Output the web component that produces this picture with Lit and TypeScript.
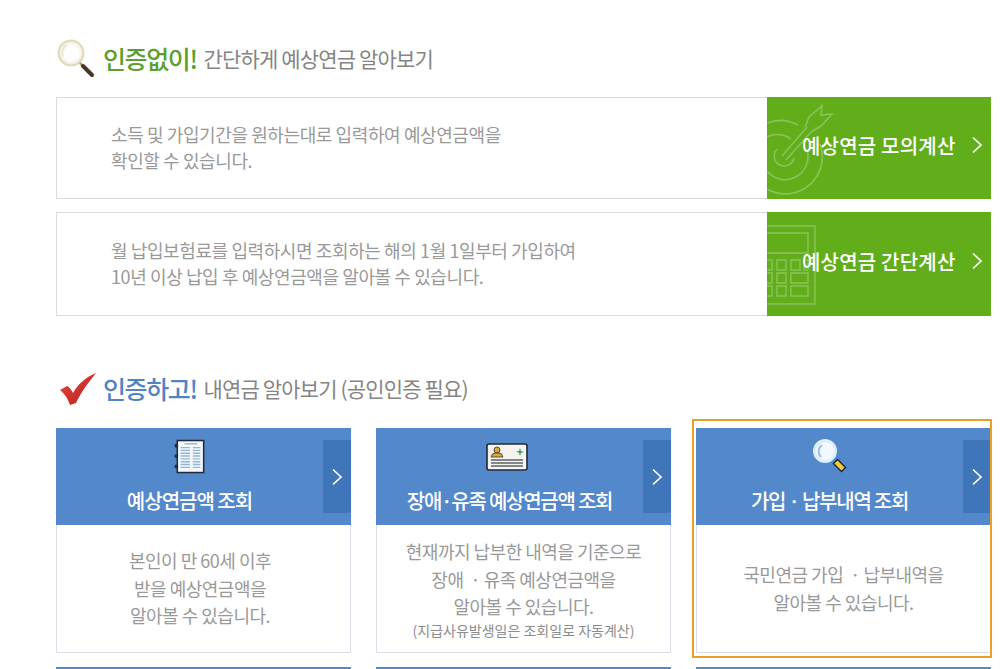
import { LitElement, html, css, svg } from 'lit';
import { customElement } from 'lit/decorators.js';

const magnifier = svg`<svg width="40" height="40" viewBox="0 0 40 40">
  <defs><radialGradient id="lens" cx="50%" cy="50%" r="50%"><stop offset="0.6" stop-color="#fff"/><stop offset="0.9" stop-color="#f1ecdc"/><stop offset="1" stop-color="#d8cfae"/></radialGradient></defs>
  <line x1="23" y1="24" x2="35" y2="36" stroke="#b89a70" stroke-width="2.5" stroke-linecap="round"/>
  <line x1="27" y1="28" x2="36" y2="37" stroke="#4a3426" stroke-width="4" stroke-linecap="round"/>
  <circle cx="15" cy="15" r="12.5" fill="url(#lens)" stroke="#e2dabd" stroke-width="2"/>
  <path d="M7 18a9 9 0 0 1 4-11" fill="none" stroke="#ece7d4" stroke-width="2"/>
</svg>`;

const check = svg`<svg width="36" height="32" viewBox="0 0 36 32">
  <defs><linearGradient id="red" x1="0" y1="0" x2="1" y2="1"><stop offset="0" stop-color="#ee4a40"/><stop offset="1" stop-color="#b01c1c"/></linearGradient></defs>
  <path d="M0 17 L7 13 Q10 14 13 20 C18 11 26 4 36 0 C29 9 21 19 16 30 L10 32 C8 26 5 21 0 17Z" fill="url(#red)"/>
</svg>`;

const target = svg`<svg class="bg" width="70" height="92" viewBox="0 0 70 92" fill="none" stroke="#8cc25c" stroke-width="1.6">
  <path d="M0 19a37 37 0 0 1 31 2M53 40a37 37 0 0 1-53 45"/>
  <path d="M0 33a23 23 0 0 1 24 2M40 46a23 23 0 0 1-40 21"/>
  <path d="M10 45a10 10 0 1 0 17 9"/>
  <path d="M15 52 L40 23 M19 56 L44 28"/>
  <path d="M38 23 L42 13 L55 2 L54 11 L65 10 L54 22 L44 28"/>
</svg>`;

const calculator = svg`<svg class="bg tall" width="50" height="80" viewBox="0 0 50 80" fill="none" stroke="#8cc25c" stroke-width="1.4">
  <path d="M0 1H48V79H0"/>
  <path d="M0 8H41V28H0"/>
  <path d="M0 35H5V45H0M10 35H19V45H10ZM24 35H33V45H24ZM37 35H41V45H37Z"/>
  <path d="M0 48H5V58H0M10 48H19V58H10ZM24 48H41V58H24Z"/>
  <path d="M0 61H5V71H0M10 61H19V71H10ZM24 61H41V71H24Z"/>
</svg>`;

const notebook = svg`<svg width="32" height="36" viewBox="0 0 34 38">
  <rect x="3.5" y="1.5" width="28" height="34" fill="#f4f8fc" stroke="#1f2a3a" stroke-width="1.6"/>
  <circle cx="2.5" cy="7" r="2" fill="#1f2a3a"/><circle cx="2.5" cy="18" r="2" fill="#1f2a3a"/><circle cx="2.5" cy="29" r="2" fill="#1f2a3a"/>
  <path d="M11 5H25" stroke="#9fb4cc" stroke-width="1.5"/>
  <path d="M7 9H17M20 9H28M7 12H17M20 12H28M7 15H17M20 15H28M7 18H17M20 18H28M7 21H17M20 21H28M7 24H17M20 24H28M7 27H17M20 27H28M7 30H17M20 30H28" stroke="#92b6da" stroke-width="1.5"/>
</svg>`;

const idCard = svg`<svg width="42" height="28" viewBox="0 0 42 28">
  <rect x="1" y="1" width="40" height="26" rx="2" fill="#f6f4ee" stroke="#1f2a3a" stroke-width="1.6"/>
  <circle cx="11" cy="7" r="3" fill="#d8a93a" stroke="#3a3220" stroke-width="0.8"/>
  <path d="M5 14 Q6 10 9 10 H13 Q16 10 17 14Z" fill="#d8a93a" stroke="#3a3220" stroke-width="0.8"/>
  <path d="M30 8 L33 8 L34 5 L35 8 L38 9 L35 10 L34 13 L33 10Z" fill="#3fa56a"/>
  <path d="M5 17H37M5 20H37M5 23H37" stroke="#5f6368" stroke-width="1.4"/>
</svg>`;

const searchIcon = svg`<svg width="36" height="36" viewBox="0 0 36 36">
  <line x1="23" y1="22" x2="32" y2="31" stroke="#1c2430" stroke-width="7"/>
  <line x1="24" y1="23" x2="31" y2="30" stroke="#f0cd3a" stroke-width="4.5"/>
  <circle cx="13" cy="12" r="10.5" fill="#f2f8ff" stroke="#dcefff" stroke-width="3"/>
  <path d="M9 18a8 8 0 0 1 1-12" fill="none" stroke="#9cc0e6" stroke-width="2"/>
</svg>`;

const chevron = svg`<svg width="12" height="18" viewBox="0 0 12 18" fill="none" stroke="#fff" stroke-width="1.7"><path d="M2 1.5 L10 9 L2 16.5"/></svg>`;

@customElement('app-root')
export class AppRoot extends LitElement {

    static styles = css`
    :host {
      display: block;
      height: 669px;
      overflow: hidden;
      background: #fff;
      box-sizing: border-box;
      padding: 37px 17px 0 56px;
      font-family: "Noto Sans CJK KR", "Noto Sans", sans-serif;
      color: #999;
    }

    .heading {
      display: flex;
      align-items: center;
      height: 42px;
      white-space: nowrap;
    }

    .heading .mark {
      width: 47px;
      display: flex;
      flex: none;
    }

    .heading.second .mark {
      width: 43px;
      padding-left: 4px;
      padding-top: 2px;
    }

    .heading strong {
      font-size: 25px;
      font-weight: 500;
      letter-spacing: -1.4px;
      margin-right: 7px;
    }

    .heading span {
      font-size: 21px;
      letter-spacing: -0.85px;
      color: #858585;
    }

    .green { color: #5c9f2e; }
    .blue { color: #4f84c4; }

    .first { margin-bottom: 18px; }
    .second { margin: 51px 0 19px; }

    .banner {
      display: flex;
      height: 102px;
      box-sizing: border-box;
      border: 1px solid #dcdcd6;
      border-right: 0;
    }

    .banner.tall {
      height: 104px;
      margin-top: 13px;
    }

    .banner p {
      flex: 1;
      margin: 0;
      padding: 0 0 2px 54px;
      align-self: center;
      font-size: 18px;
      line-height: 26.5px;
      letter-spacing: -0.4px;
    }

    .calc {
      position: relative;
      overflow: hidden;
      width: 224px;
      margin: -1px 0;
      background: #62ae1a;
      color: #fff;
      display: flex;
      align-items: center;
      box-sizing: border-box;
      padding: 0 8px 6px 35px;
      justify-content: space-between;
      font-size: 20px;
      font-weight: 500;
      letter-spacing: 0.2px;
    }

    .calc .bg {
      position: absolute;
      left: 0;
      top: 7px;
    }

    .calc .bg.tall {
      top: 13px;
    }

    .calc b {
      position: relative;
      font-weight: 500;
    }

    .calc svg:not(.bg) {
      position: relative;
    }

    .cards {
      display: grid;
      grid-template-columns: repeat(3, 295px);
      column-gap: 25px;
      row-gap: 14px;
    }

    .card {
      position: relative;
    }

    .card.focus::after {
      content: "";
      position: absolute;
      left: -4px;
      right: -1px;
      top: -9px;
      bottom: -5px;
      border: 2px solid #e9a024;
      pointer-events: none;
    }

    .head {
      position: relative;
      height: 97px;
      box-sizing: border-box;
      padding-right: 28px;
      background: #5388cb;
      color: #fff;
      display: flex;
      flex-direction: column;
      align-items: center;
    }

    .head .icon {
      height: 58px;
      display: flex;
      align-items: center;
    }

    .head .icon.id {
      padding-right: 6px;
    }

    .head h3 {
      margin: 0;
      font-size: 20px;
      font-weight: 500;
      line-height: 30px;
      letter-spacing: -1px;
      white-space: nowrap;
    }

    .head h3.tight {
      letter-spacing: -1.25px;
    }

    .head .go {
      position: absolute;
      right: 0;
      top: 12px;
      width: 28px;
      height: 73px;
      background: #3f76b9;
      display: flex;
      align-items: center;
      justify-content: center;
    }

    .body {
      height: 128px;
      box-sizing: border-box;
      border: 1px solid #d8dde6;
      border-top: 0;
      display: flex;
      flex-direction: column;
      justify-content: center;
      text-align: center;
      font-size: 18px;
      line-height: 27.5px;
      letter-spacing: -0.5px;
    }

    .body.shifted {
      padding-right: 7px;
    }

    .body small {
      font-size: 14px;
      line-height: 18px;
      letter-spacing: 0;
      color: #8c8c8c;
    }
  `;

    render() {
        return html`
      <div class="heading first">
        <div class="mark">${magnifier}</div>
        <strong class="green">인증없이!</strong>
        <span>간단하게 예상연금 알아보기</span>
      </div>

      <div class="banner">
        <p>소득 및 가입기간을 원하는대로 입력하여 예상연금액을<br />확인할 수 있습니다.</p>
        <div class="calc">${target}<b>예상연금 모의계산</b>${chevron}</div>
      </div>
      <div class="banner tall">
        <p>월 납입보험료를 입력하시면 조회하는 해의 1월 1일부터 가입하여<br />10년 이상 납입 후 예상연금액을 알아볼 수 있습니다.</p>
        <div class="calc">${calculator}<b>예상연금 간단계산</b>${chevron}</div>
      </div>

      <div class="heading second">
        <div class="mark">${check}</div>
        <strong class="blue">인증하고!</strong>
        <span>내연금 알아보기 (공인인증 필요)</span>
      </div>

      <div class="cards">
        <div class="card">
          <div class="head">
            <div class="icon">${notebook}</div>
            <h3>예상연금액 조회</h3>
            <div class="go">${chevron}</div>
          </div>
          <div class="body shifted">본인이 만 60세 이후<br />받을 예상연금액을<br />알아볼 수 있습니다.</div>
        </div>
        <div class="card">
          <div class="head">
            <div class="icon id">${idCard}</div>
            <h3 class="tight">장애·유족 예상연금액 조회</h3>
            <div class="go">${chevron}</div>
          </div>
          <div class="body">
            <div>현재까지 납부한 내역을 기준으로<br />장애 &nbsp;· 유족 예상연금액을<br />알아볼 수 있습니다.</div>
            <small>(지급사유발생일은 조회일로 자동계산)</small>
          </div>
        </div>
        <div class="card focus">
          <div class="head">
            <div class="icon">${searchIcon}</div>
            <h3 class="tight">가입 · 납부내역 조회</h3>
            <div class="go">${chevron}</div>
          </div>
          <div class="body">국민연금 가입 &nbsp;· 납부내역을<br />알아볼 수 있습니다.</div>
        </div>
        <div class="card"><div class="head"></div></div>
        <div class="card"><div class="head"></div></div>
        <div class="card"><div class="head"></div></div>
      </div>
    `;
    }
}
